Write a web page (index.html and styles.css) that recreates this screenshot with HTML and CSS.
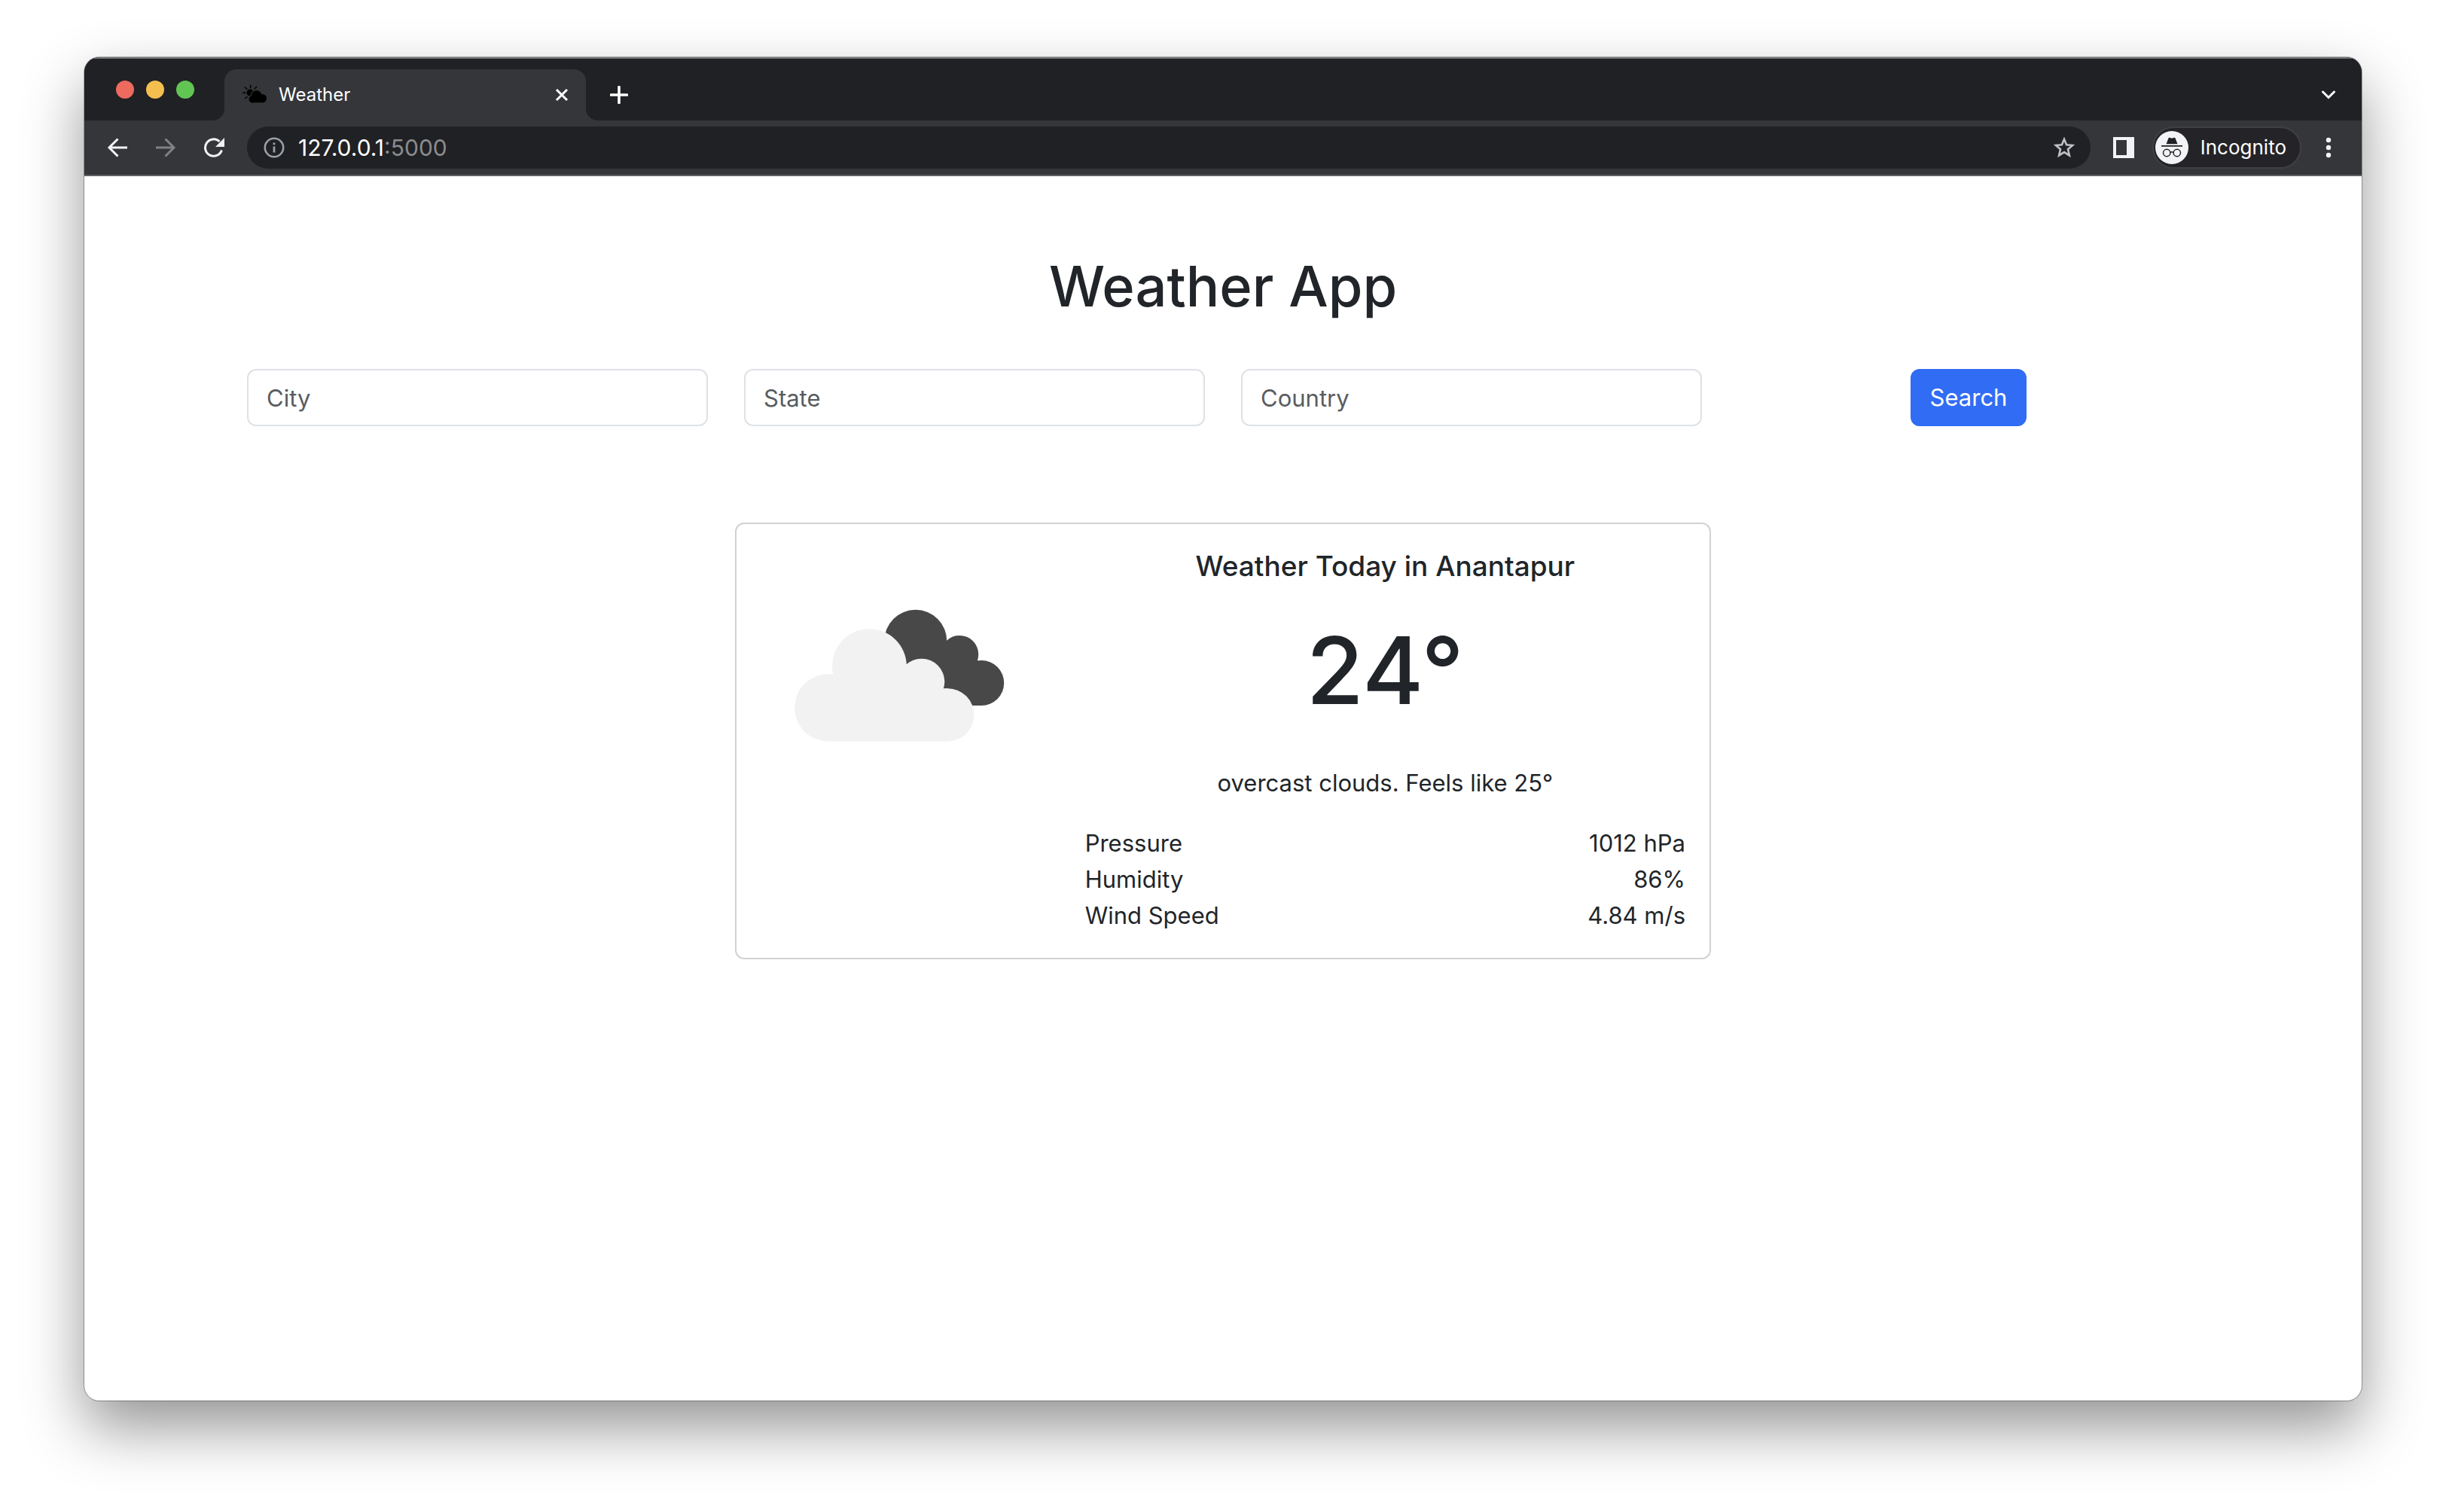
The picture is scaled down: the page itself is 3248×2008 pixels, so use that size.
FILE: index.html
```html
<!DOCTYPE html>
<html lang="en">
<head>
<meta charset="utf-8">
<meta name="viewport" content="width=device-width, initial-scale=1">
<title>Weather</title>
<link rel="stylesheet" href="styles.css">
</head>
<body>
<div class="window">
  <header class="chrome">
    <div class="tab-strip">
      <div class="lights">
        <span class="light light-close"></span>
        <span class="light light-min"></span>
        <span class="light light-max"></span>
      </div>
      <div class="tab">
        <svg class="favicon" viewBox="0 0 32 32" aria-hidden="true">
          <path d="M10.700 3.300v3.200M16 8l2.700-2.700M6 8L3.300 6M.8 13.300h3.200M3.700 20.700L6 18.500" stroke="#000" stroke-width="1.500" stroke-linecap="round"/>
          <circle cx="10.300" cy="13.300" r="4.700"/>
          <g stroke="#35363a" stroke-width="1.400"><circle cx="18.700" cy="16.700" r="7"/><circle cx="13.300" cy="21.700" r="5.200"/></g>
          <circle cx="18.700" cy="16.700" r="6.500"/><circle cx="13.300" cy="21.700" r="4.700"/><circle cx="26.300" cy="20.600" r="5.700"/>
          <path d="M13.300 18h13v8.300h-13z"/>
        </svg>
        <span class="tab-title">Weather</span>
        <button class="icon-button" type="button" aria-label="Close tab">
          <svg width="20" height="20" viewBox="0 0 20 20"><path d="M3 3l14 14M17 3L3 17" stroke="#fff" stroke-width="3"/></svg>
        </button>
      </div>
      <button class="icon-button new-tab" type="button" aria-label="New tab">
        <svg width="24" height="24" viewBox="0 0 24 24"><path d="M12 1.500v21M1.500 12h21" stroke="#fff" stroke-width="3.600" stroke-linecap="round"/></svg>
      </button>
      <button class="icon-button tab-search" type="button" aria-label="Search tabs">
        <svg width="20" height="12" viewBox="0 0 20 12"><path d="M2.500 2l7.500 7.500L17.500 2" fill="none" stroke="#fff" stroke-width="3" stroke-linecap="round"/></svg>
      </button>
    </div>
    <div class="toolbar">
      <nav class="nav-buttons">
        <button class="icon-button" type="button" aria-label="Back">
          <svg width="28" height="28" viewBox="0 0 28 28"><path d="M27 14H3.500M14.500 2.500L3 14l11.500 11.500" fill="none" stroke="#f1f3f4" stroke-width="3"/></svg>
        </button>
        <button class="icon-button" type="button" aria-label="Forward">
          <svg width="28" height="28" viewBox="0 0 28 28"><path d="M1 14h23.500M13.500 2.500L25 14 13.500 25.500" fill="none" stroke="#808184" stroke-width="3"/></svg>
        </button>
        <button class="icon-button" type="button" aria-label="Reload">
          <svg width="28" height="28" viewBox="0 0 28 28"><path d="M24.400 17.500A11.200 11.200 0 1 1 21.500 6" fill="none" stroke="#f1f3f4" stroke-width="3"/><path d="M28 1v12H16z" fill="#f1f3f4"/></svg>
        </button>
      </nav>
      <div class="omnibox">
        <svg width="28" height="28" viewBox="0 0 28 28" aria-hidden="true"><circle cx="14" cy="14" r="12.200" fill="none" stroke="#9aa0a6" stroke-width="2.600"/><path d="M14 12.500v8M14 7.500v2.800" stroke="#9aa0a6" stroke-width="2.800"/></svg>
        <span class="url">127.0.0.1<span class="port">:5000</span></span>
        <button class="icon-button" type="button" aria-label="Bookmark">
          <svg width="30" height="30" viewBox="0 0 30 30"><path d="M15 3.800l3.100 7.500 8 .700-6.100 5.300 1.900 8.100-6.900-4.300-6.900 4.300L10 17.300 3.900 12l8-.700z" fill="none" stroke="#bdc1c6" stroke-width="2.600"/></svg>
        </button>
      </div>
      <button class="icon-button side-panel" type="button" aria-label="Side panel">
        <svg width="28" height="28" viewBox="0 0 28 28"><path d="M0 0h28v28H0zM4 4v20h14V4z" fill="#f1f3f4" fill-rule="evenodd"/></svg>
      </button>
      <button class="profile" type="button">
        <svg width="44" height="44" viewBox="0 0 44 44" aria-hidden="true"><circle cx="22" cy="22" r="22" fill="#f1f3f4"/><g fill="#202124"><path d="M14.500 17.300l3-7.800c.200-.600.900-.900 1.500-.700l3 .900 3-.900c.600-.200 1.300.100 1.500.700l3 7.800z"/><path d="M8 19h28v1.800H8z"/></g><g fill="none" stroke="#202124" stroke-width="1.500"><circle cx="15.200" cy="29" r="4.700"/><circle cx="28.800" cy="29" r="4.700"/><path d="M20 28.500q2-1.400 4 0"/></g></svg>
        <span>Incognito</span>
      </button>
      <button class="icon-button menu" type="button" aria-label="Menu">
        <svg width="8" height="28" viewBox="0 0 8 28"><g fill="#f1f3f4"><circle cx="4" cy="4" r="3.200"/><circle cx="4" cy="14" r="3.200"/><circle cx="4" cy="24" r="3.200"/></g></svg>
      </button>
    </div>
  </header>
  <main class="page">
    <h1 class="title">Weather App</h1>
    <form class="search">
      <input class="field" type="text" placeholder="City" aria-label="City">
      <input class="field" type="text" placeholder="State" aria-label="State">
      <input class="field" type="text" placeholder="Country" aria-label="Country">
      <button class="submit" type="button">Search</button>
    </form>
    <section class="card">
      <svg class="clouds" viewBox="0 0 430 430" role="img" aria-label="Overcast clouds">
        <g fill="#484849">
          <circle cx="237.400" cy="155.200" r="41.500"/>
          <circle cx="295.800" cy="172.700" r="25"/>
          <circle cx="324.700" cy="210.600" r="30"/>
          <path d="M237 155h42l17 17 24 9 5 30v29.600h-75z"/>
        </g>
        <g fill="#f2f2f2">
          <circle cx="121.500" cy="243.500" r="44.500"/>
          <circle cx="176.200" cy="188.300" r="49.300"/>
          <circle cx="245.400" cy="209" r="30.500"/>
          <circle cx="280" cy="253" r="35"/>
          <path d="M121.500 288v-89h5.500l49-11 50-2 19 23 29 9h6v70z"/>
        </g>
      </svg>
      <div class="card-body">
        <h2 class="card-title">Weather Today in Anantapur</h2>
        <p class="temperature">24°</p>
        <p class="summary">overcast clouds. Feels like 25°</p>
        <dl class="details">
          <div class="detail"><dt>Pressure</dt><dd>1012 hPa</dd></div>
          <div class="detail"><dt>Humidity</dt><dd>86%</dd></div>
          <div class="detail"><dt>Wind Speed</dt><dd>4.84 m/s</dd></div>
        </dl>
      </div>
    </section>
  </main>
</div>
</body>
</html>
```
FILE: styles.css
```css
*,
*::before,
*::after {
  box-sizing: border-box;
}

body {
  margin: 0;
  min-height: 100vh;
  padding: 76px 112px 148px;
  display: flex;
  background: #fff;
  color: #212529;
  font-family: Inter, "Liberation Sans", sans-serif;
  font-size: 31px;
  line-height: 48px;
}

button,
input {
  font: inherit;
}

.window {
  flex: 1;
  display: flex;
  flex-direction: column;
  overflow: hidden;
  border-radius: 20px;
  background: #fff;
  box-shadow: 0 0 0 1px rgba(0, 0, 0, 0.3), 0 36px 80px rgba(0, 0, 0, 0.42);
}

/* Browser chrome */
.chrome {
  background: #35363a;
  border-bottom: 2px solid #5f6064;
  color: #fff;
}

.tab-strip {
  display: flex;
  align-items: flex-end;
  height: 84px;
  padding-right: 34px;
  background: #202124;
  border-top: 2px solid #737476;
}

.lights {
  align-self: center;
  display: flex;
  gap: 16px;
  width: 186px;
  padding-left: 42px;
}

.light {
  width: 24px;
  height: 24px;
  border-radius: 50%;
}

.light-close { background: #ed6a5e; }
.light-min { background: #f5bf4f; }
.light-max { background: #61c554; }

.tab {
  position: relative;
  display: flex;
  align-items: center;
  gap: 16px;
  width: 480px;
  height: 68px;
  padding: 0 22px 0 24px;
  border-radius: 16px 16px 0 0;
  background: #35363a;
  font-size: 24px;
}

/* Flared feet of the active tab */
.tab::before,
.tab::after {
  content: "";
  position: absolute;
  bottom: 0;
  width: 16px;
  height: 16px;
}

.tab::before {
  right: 100%;
  background: radial-gradient(circle at 0 0, transparent 16px, #35363a 16px);
}

.tab::after {
  left: 100%;
  background: radial-gradient(circle at 100% 0, transparent 16px, #35363a 16px);
}

.favicon {
  width: 32px;
  height: 32px;
}

.tab-title {
  flex: 1;
}

.icon-button {
  display: flex;
  align-items: center;
  padding: 0;
  border: 0;
  background: none;
}

.new-tab,
.tab-search {
  height: 68px;
}

.new-tab {
  margin-left: 32px;
}

.tab-search {
  margin-left: auto;
}

.toolbar {
  display: flex;
  align-items: center;
  height: 72px;
  padding: 0 40px 0 30px;
}

.nav-buttons {
  display: flex;
  gap: 36px;
}

.omnibox {
  flex: 1;
  display: flex;
  align-items: center;
  gap: 18px;
  height: 56px;
  margin-left: 30px;
  padding: 0 20px 0 22px;
  border-radius: 28px;
  background: #202124;
  font-size: 30px;
}

.url {
  flex: 1;
}

.port {
  color: #8b8c8f;
}

.side-panel {
  margin-left: 30px;
}

.profile {
  display: flex;
  align-items: center;
  gap: 16px;
  height: 56px;
  margin-left: 24px;
  padding: 0 18px 0 2px;
  border: 2px solid #3f4044;
  border-radius: 28px;
  background: #242428;
  color: #fff;
  font-size: 26px;
}

.menu {
  margin-left: 32px;
}

/* Weather page */
.page {
  width: 100%;
  max-width: 2640px;
  margin: 0 auto;
  padding: 96px 24px;
}

.title {
  margin: 0 0 60px;
  font-size: 74px;
  font-weight: 500;
  line-height: 100px;
  text-align: center;
}

.search {
  display: grid;
  grid-template-columns: repeat(4, 1fr);
  gap: 48px;
  margin-bottom: 128px;
}

.field {
  width: 100%;
  height: 76px;
  padding: 0 24px;
  border: 2px solid #dee2e6;
  border-radius: 12px;
  background: #fff;
  color: #212529;
}

.field::placeholder {
  color: #595c5f;
  opacity: 1;
}

.submit {
  justify-self: center;
  height: 76px;
  padding: 0 24px;
  border: 2px solid #316cf4;
  border-radius: 12px;
  background: #316cf4;
  color: #fff;
}

.card {
  display: grid;
  grid-template-columns: 1fr 2fr;
  align-items: start;
  width: 50%;
  margin: 0 auto;
  border: 2px solid #d2d2d2;
  border-radius: 12px;
}

.clouds {
  width: 100%;
}

.card-body {
  padding: 32px;
  text-align: center;
}

.card-title {
  margin: 0 0 16px;
  font-size: 37px;
  font-weight: 500;
  line-height: 48px;
}

.temperature {
  margin: 0 0 28px;
  font-size: 124px;
  font-weight: 500;
  line-height: 196px;
}

.summary {
  margin: 0 0 32px;
}

.details {
  margin: 0;
}

.detail {
  display: flex;
  justify-content: space-between;
}

.detail dd {
  margin: 0;
}
```
